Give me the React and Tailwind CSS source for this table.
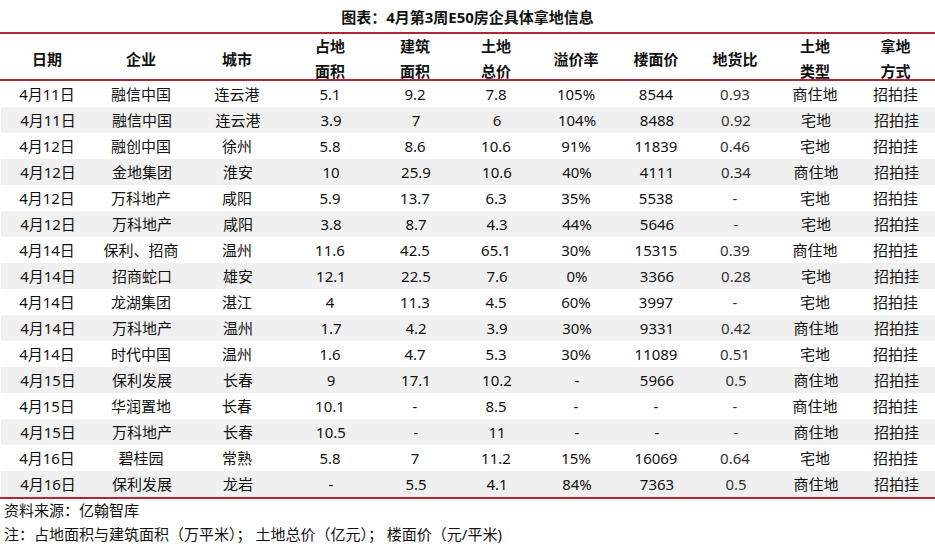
import React from "react";

const heads = [
  ["日期"],
  ["企业"],
  ["城市"],
  ["占地", "面积"],
  ["建筑", "面积"],
  ["土地", "总价"],
  ["溢价率"],
  ["楼面价"],
  ["地货比"],
  ["土地", "类型"],
  ["拿地", "方式"],
];

const rows = [
  ["4月11日", "融信中国", "连云港", "5.1", "9.2", "7.8", "105%", "8544", "0.93", "商住地", "招拍挂"],
  ["4月11日", "融信中国", "连云港", "3.9", "7", "6", "104%", "8488", "0.92", "宅地", "招拍挂"],
  ["4月12日", "融创中国", "徐州", "5.8", "8.6", "10.6", "91%", "11839", "0.46", "宅地", "招拍挂"],
  ["4月12日", "金地集团", "淮安", "10", "25.9", "10.6", "40%", "4111", "0.34", "商住地", "招拍挂"],
  ["4月12日", "万科地产", "咸阳", "5.9", "13.7", "6.3", "35%", "5538", "-", "宅地", "招拍挂"],
  ["4月12日", "万科地产", "咸阳", "3.8", "8.7", "4.3", "44%", "5646", "-", "宅地", "招拍挂"],
  ["4月14日", "保利、招商", "温州", "11.6", "42.5", "65.1", "30%", "15315", "0.39", "商住地", "招拍挂"],
  ["4月14日", "招商蛇口", "雄安", "12.1", "22.5", "7.6", "0%", "3366", "0.28", "宅地", "招拍挂"],
  ["4月14日", "龙湖集团", "湛江", "4", "11.3", "4.5", "60%", "3997", "-", "宅地", "招拍挂"],
  ["4月14日", "万科地产", "温州", "1.7", "4.2", "3.9", "30%", "9331", "0.42", "商住地", "招拍挂"],
  ["4月14日", "时代中国", "温州", "1.6", "4.7", "5.3", "30%", "11089", "0.51", "宅地", "招拍挂"],
  ["4月15日", "保利发展", "长春", "9", "17.1", "10.2", "-", "5966", "0.5", "商住地", "招拍挂"],
  ["4月15日", "华润置地", "长春", "10.1", "-", "8.5", "-", "-", "-", "商住地", "招拍挂"],
  ["4月15日", "万科地产", "长春", "10.5", "-", "11", "-", "-", "-", "商住地", "招拍挂"],
  ["4月16日", "碧桂园", "常熟", "5.8", "7", "11.2", "15%", "16069", "0.64", "宅地", "招拍挂"],
  ["4月16日", "保利发展", "龙岩", "-", "5.5", "4.1", "84%", "7363", "0.5", "商住地", "招拍挂"],
];

const cols = "grid grid-cols-[94px_94px_98px_88px_82px_80px_80px_80px_78px_82px_79px]";

export default function App() {
  return (
    <div
      className="w-[935px] h-[547px] bg-white text-[#111] text-[15px] overflow-hidden"
      style={{ fontFamily: '"Noto Sans", "Noto Sans CJK SC", sans-serif' }}
    >
      <div className="h-[32px] flex items-center justify-center pt-[2px] font-bold">
        图表：4月第3周E50房企具体拿地信息
      </div>
      <div className="border-t-2 border-[#b02638]">
        <div className={`${cols} h-[47px] font-bold border-b-2 border-[#b02638]`}>
          {heads.map((h, i) => (
            <div key={i} className="flex flex-col items-center justify-center leading-[25px]">
              {h.map((t) => (
                <span key={t}>{t}</span>
              ))}
            </div>
          ))}
        </div>
        <div className="border-b-2 border-[#b02638]">
          {rows.map((r, i) => (
            <div
              key={i}
              className={`${cols} h-[26px] items-center ${i % 2 === 1 ? "bg-[#f0f0f0] ml-[1px]" : ""}`}
            >
              {r.map((c, j) => (
                <div key={j} className={`text-center leading-[26px] ${j === 8 ? "text-[#333]" : ""}`}>
                  {c}
                </div>
              ))}
            </div>
          ))}
        </div>
      </div>
      <div className="px-[4px]">
        <div className="h-[22px] leading-[22px]">资料来源：亿翰智库</div>
        <div className="h-[26px] leading-[26px] whitespace-pre">
          注：占地面积与建筑面积（万平米）； 土地总价（亿元）； 楼面价（元/平米)
        </div>
      </div>
    </div>
  );
}
